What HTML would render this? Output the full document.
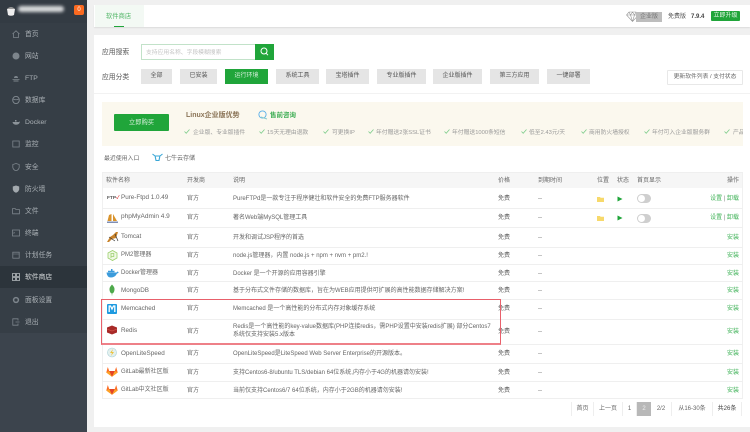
<!DOCTYPE html>
<html lang="zh"><head><meta charset="utf-8"><title>软件商店</title>
<style>
html,body{margin:0;padding:0;width:750px;height:432px;overflow:hidden;background:#f0f0f0}
body{font-family:"Liberation Sans","Noto Sans CJK SC",sans-serif;font-size:6px;color:#666}
#w{position:absolute;left:0;top:0;width:750px;height:432px;overflow:hidden;filter:blur(.35px)}
div,svg{position:absolute}
.t{position:absolute;white-space:nowrap;line-height:10px;height:10px;margin-top:.6px}
.m{left:25px;color:#aab0b5;font-size:6.800px}
.mi{left:12px;width:8px;height:8px}
.b{top:69px;height:15px;line-height:15px;background:#e5e5e5;color:#555;text-align:center;font-size:6px}
.l{left:102px;width:641px;height:1px;background:#efefef}
.g{color:#666}
.ck{width:6px;height:5px}
.f{font-size:5.800px;color:#999}
.p{top:402px;height:14px;line-height:14px;text-align:center;border-right:1px solid #eee;box-sizing:border-box;font-size:6px;color:#666}
.a{right:11px;color:#3fb257;font-size:6px}
</style></head><body><div id="w">

<!-- sidebar -->
<div style="left:0;top:0;width:87px;height:432px;background:#3c444d"></div>
<div style="left:0;top:23px;width:87px;height:310px;background:#363e46"></div>
<div style="left:0;top:0;width:87px;height:23px;background:#333b43"></div>
<div style="left:0;top:266px;width:87px;height:22px;background:#2c343b"></div>
<svg style="left:5px;top:4px" width="12" height="13" viewBox="0 0 12 13"><path d="M2 5h8l-1 6q-3 1.500-6 0z" fill="#eee"/><path d="M2 5q4-4 8 0" fill="#999"/></svg>
<div style="left:18px;top:6px;width:46px;height:6px;background:#d8dadc;border-radius:3px;filter:blur(1.500px)"></div>
<div style="left:74px;top:5px;width:10px;height:10px;background:#fb6a20;border-radius:2px"></div>
<div class="t" style="left:74px;top:4.500px;width:10px;text-align:center;color:#fff;font-size:6px">0</div>

<svg class="mi" style="top:30px" viewBox="0 0 8 8"><path d="M.5 4L4 .8 7.500 4M1.500 3.500V7.500h5V3.500" fill="none" stroke="#7d858c" stroke-width=".8"/></svg>
<div class="t m" style="top:29px">首页</div>
<svg class="mi" style="top:52px" viewBox="0 0 8 8"><circle cx="4" cy="4" r="3.500" fill="#7d858c"/></svg>
<div class="t m" style="top:51px">网站</div>
<svg class="mi" style="top:74px" viewBox="0 0 8 8"><path d="M2 4a2 2 0 014 0zM.5 5h7v.8h-7zM1.500 6.500h5v1h-5z" fill="#7d858c"/></svg>
<div class="t m" style="top:73px">FTP</div>
<svg class="mi" style="top:96px" viewBox="0 0 8 8"><ellipse cx="4" cy="4" rx="3.300" ry="3.600" fill="none" stroke="#7d858c"/><path d="M1 3q3 1.500 6 0" fill="none" stroke="#7d858c" stroke-width=".7"/></svg>
<div class="t m" style="top:95px">数据库</div>
<svg class="mi" style="top:118px" viewBox="0 0 8 8"><path d="M.5 4h6.500l1-.8q-.5 3.500-4 3.500-3 0-3.500-2.700zM3 2h1.500v1.500H3z" fill="#8d949a"/></svg>
<div class="t m" style="top:117px">Docker</div>
<svg class="mi" style="top:140px" viewBox="0 0 8 8"><rect x=".8" y="1" width="6.400" height="6" fill="none" stroke="#7d858c" stroke-width=".8"/></svg>
<div class="t m" style="top:139px">监控</div>
<svg class="mi" style="top:163px" viewBox="0 0 8 8"><path d="M4 .5l3.200 1v3Q6.500 7 4 7.800 1.500 7 .8 4.500v-3z" fill="none" stroke="#7d858c" stroke-width=".8"/></svg>
<div class="t m" style="top:162px">安全</div>
<svg class="mi" style="top:185px" viewBox="0 0 8 8"><path d="M4 .5l3.200 1v3Q6.500 7 4 7.800 1.500 7 .8 4.500v-3z" fill="#a3a9ae"/></svg>
<div class="t m" style="top:184px">防火墙</div>
<svg class="mi" style="top:207px" viewBox="0 0 8 8"><path d="M.6 1.500h2.500l.8 1h3.500v4.300H.6z" fill="none" stroke="#7d858c" stroke-width=".8"/></svg>
<div class="t m" style="top:206px">文件</div>
<svg class="mi" style="top:229px" viewBox="0 0 8 8"><rect x=".5" y="1" width="7" height="6" fill="none" stroke="#7d858c" stroke-width=".8"/><path d="M1.500 3l1 .8-1 .8" fill="none" stroke="#7d858c" stroke-width=".6"/></svg>
<div class="t m" style="top:228px">终端</div>
<svg class="mi" style="top:251px" viewBox="0 0 8 8"><rect x=".8" y="1.200" width="6.400" height="6" fill="none" stroke="#7d858c" stroke-width=".8"/><path d="M.8 3h6.400" stroke="#7d858c" stroke-width=".6"/></svg>
<div class="t m" style="top:250px">计划任务</div>
<svg class="mi" style="top:273px" viewBox="0 0 8 8"><path d="M.5.500h3v3h-3zM4.500.500h3v3h-3zM.5 4.500h3v3h-3zM4.500 4.500h3v3h-3z" fill="none" stroke="#b8bdc1" stroke-width=".8"/></svg>
<div class="t m" style="top:272px;color:#d5d8da">软件商店</div>
<svg class="mi" style="top:296px" viewBox="0 0 8 8"><circle cx="4" cy="4" r="2.400" fill="none" stroke="#7d858c" stroke-width="1.500"/></svg>
<div class="t m" style="top:295px">面板设置</div>
<svg class="mi" style="top:318px" viewBox="0 0 8 8"><path d="M6 2.500V.8H.8v6.400H6V5.500M3.500 4h4" fill="none" stroke="#7d858c" stroke-width=".8"/></svg>
<div class="t m" style="top:317px">退出</div>

<!-- top bar -->
<div style="left:94px;top:5px;width:656px;height:22px;background:#fff;box-shadow:0 1px 1px #ddd"></div>
<div style="left:95px;top:5px;width:49px;height:22px;background:#f3f9f4"></div>
<div class="t" style="left:106px;top:11.500px;font-size:6.300px;color:#4fb565">软件商店</div>
<div style="left:114px;top:26px;width:10px;height:1px;background:#20a53a"></div>
<svg style="left:626px;top:11px" width="13" height="11" viewBox="0 0 13 11"><path d="M3 1h7l2.500 3L6.500 10.500.5 4zM.5 4h12M4.500 4l2 6.500 2-6.500M3 1l1.500 3L6.500 1l2 3L10 1" fill="none" stroke="#999" stroke-width=".6"/></svg>
<div style="left:636px;top:12px;width:26px;height:10px;background:#bdbdbd"></div>
<div class="t" style="left:636px;top:11.500px;width:26px;text-align:center;color:#777;font-size:6px">企业版</div>
<div class="t" style="left:668px;top:11.500px;font-size:6px;color:#555">免费版</div>
<div class="t" style="left:691px;top:11.500px;font-size:6px;color:#444;font-weight:bold">7.9.4</div>
<div style="left:711px;top:11px;width:29px;height:10px;background:#20a53a;border-radius:1px"></div>
<div class="t" style="left:711px;top:10.500px;width:29px;color:#e5f5e8;text-align:center;font-size:6px">立即升级</div>

<!-- main card -->
<div style="left:94px;top:35px;width:656px;height:392px;background:#fff"></div>
<div class="t" style="left:102px;top:47px;font-size:6.800px;color:#555">应用搜索</div>
<div style="left:141px;top:44px;width:114px;height:16px;box-sizing:border-box;border:1px solid #c2e2c9;border-right:0"></div>
<div class="t" style="left:146px;top:47px;font-size:5.800px;color:#c4c4c4">支持应用名称、字段模糊搜索</div>
<div style="left:255px;top:44px;width:19px;height:16px;background:#20a53a"></div>
<svg style="left:260px;top:47px" width="9" height="10" viewBox="0 0 9 10"><circle cx="4" cy="4" r="3" fill="none" stroke="#fff"/><path d="M6 6.200l2 2" stroke="#fff"/></svg>
<div class="t" style="left:102px;top:72px;font-size:6.800px;color:#555">应用分类</div>
<div class="b" style="left:141px;width:31px">全部</div>
<div class="b" style="left:180px;width:37px">已安装</div>
<div class="b" style="left:225px;width:43px;background:#20a53a;color:#d8f0dd">运行环境</div>
<div class="b" style="left:276px;width:43px">系统工具</div>
<div class="b" style="left:326px;width:43px">宝塔插件</div>
<div class="b" style="left:377px;width:49px">专业版插件</div>
<div class="b" style="left:433px;width:49px">企业版插件</div>
<div class="b" style="left:490px;width:49px">第三方应用</div>
<div class="b" style="left:547px;width:43px">一键部署</div>
<div style="left:667px;top:70px;width:76px;height:15px;box-sizing:border-box;border:1px solid #e8e8e8;border-radius:1px"></div>
<div class="t" style="left:667px;top:71.500px;width:76px;text-align:center;font-size:5.800px;color:#666">更新软件列表 / 支付状态</div>
<div style="left:94px;top:93px;width:656px;height:1px;background:#f2f2f2"></div>

<!-- banner -->
<div style="left:102px;top:102px;width:641px;height:44px;background:#fbf8ee;overflow:hidden">
<div style="left:12px;top:12px;width:55px;height:17px;background:#20a53a;border-radius:1px"></div>
<div class="t" style="left:12px;top:15.500px;width:55px;text-align:center;color:#d8f0dd;font-size:6.300px">立即购买</div>
<div class="t" style="left:84px;top:8px;font-size:7px;font-weight:bold;color:#8a7356">Linux企业版优势</div>
<svg style="left:156px;top:8px" width="10" height="10" viewBox="0 0 10 10"><circle cx="4.500" cy="4.500" r="3.600" fill="none" stroke="#58aee8" stroke-width=".9"/><path d="M3 7l6 2" stroke="#8cc" stroke-width="1"/></svg>
<div class="t" style="left:168px;top:8px;font-size:6.500px;font-weight:bold;color:#3fae55">售前咨询</div>
<svg class="ck" style="left:82px;top:27px" viewBox="0 0 6 5"><path d="M.5 2.500L2.200 4.300 5.500.5" fill="none" stroke="#7ccc8a" stroke-width=".8"/></svg><div class="t f" style="left:91px;top:25px">企业版、专业版插件</div>
<svg class="ck" style="left:157px;top:27px" viewBox="0 0 6 5"><path d="M.5 2.500L2.200 4.300 5.500.5" fill="none" stroke="#7ccc8a" stroke-width=".8"/></svg><div class="t f" style="left:165px;top:25px">15天无理由退款</div>
<svg class="ck" style="left:221px;top:27px" viewBox="0 0 6 5"><path d="M.5 2.500L2.200 4.300 5.500.5" fill="none" stroke="#7ccc8a" stroke-width=".8"/></svg><div class="t f" style="left:230px;top:25px">可更换IP</div>
<svg class="ck" style="left:266px;top:27px" viewBox="0 0 6 5"><path d="M.5 2.500L2.200 4.300 5.500.5" fill="none" stroke="#7ccc8a" stroke-width=".8"/></svg><div class="t f" style="left:274px;top:25px">年付赠送2张SSL证书</div>
<svg class="ck" style="left:342px;top:27px" viewBox="0 0 6 5"><path d="M.5 2.500L2.200 4.300 5.500.5" fill="none" stroke="#7ccc8a" stroke-width=".8"/></svg><div class="t f" style="left:350px;top:25px">年付赠送1000条短信</div>
<svg class="ck" style="left:419px;top:27px" viewBox="0 0 6 5"><path d="M.5 2.500L2.200 4.300 5.500.5" fill="none" stroke="#7ccc8a" stroke-width=".8"/></svg><div class="t f" style="left:427px;top:25px">低至2.43元/天</div>
<svg class="ck" style="left:479px;top:27px" viewBox="0 0 6 5"><path d="M.5 2.500L2.200 4.300 5.500.5" fill="none" stroke="#7ccc8a" stroke-width=".8"/></svg><div class="t f" style="left:487px;top:25px">商用防火墙授权</div>
<svg class="ck" style="left:542px;top:27px" viewBox="0 0 6 5"><path d="M.5 2.500L2.200 4.300 5.500.5" fill="none" stroke="#7ccc8a" stroke-width=".8"/></svg><div class="t f" style="left:550px;top:25px">年付可入企业版服务群</div>
<svg class="ck" style="left:622px;top:27px" viewBox="0 0 6 5"><path d="M.5 2.500L2.200 4.300 5.500.5" fill="none" stroke="#7ccc8a" stroke-width=".8"/></svg><div class="t f" style="left:631px;top:25px">产品</div>
</div>

<div class="t g" style="left:104px;top:153px;font-size:5.900px">最近使用入口</div>
<svg style="left:152px;top:153px" width="11" height="10" viewBox="0 0 11 10"><path d="M.5 1l2.500 2h5l2.500-2M3.200 3.500L4 7.500h3l.8-4" fill="none" stroke="#3aa7d6" stroke-width="1.100"/></svg>
<div class="t g" style="left:165px;top:153px;font-size:6px">七牛云存储</div>

<!-- table -->
<div style="left:102px;top:172px;width:641px;height:16px;background:#f6f6f6"></div>
<div style="left:102px;top:172px;width:1px;height:226px;background:#f0f0f0"></div>
<div style="left:742px;top:172px;width:1px;height:226px;background:#f0f0f0"></div>
<div class="l" style="top:172px"></div><div class="l" style="top:208px"></div><div class="l" style="top:227px"></div><div class="l" style="top:247px"></div><div class="l" style="top:264px"></div><div class="l" style="top:281px"></div><div class="l" style="top:299px"></div><div class="l" style="top:319px"></div><div class="l" style="top:344px"></div><div class="l" style="top:363px"></div><div class="l" style="top:381px"></div><div class="l" style="top:398px"></div>

<div class="t g" style="left:106px;top:175px">软件名称</div>
<div class="t g" style="left:187px;top:175px">开发商</div>
<div class="t g" style="left:233px;top:175px">说明</div>
<div class="t g" style="left:498px;top:175px">价格</div>
<div class="t g" style="left:538px;top:175px">到期时间</div>
<div class="t g" style="left:597px;top:175px">位置</div>
<div class="t g" style="left:617px;top:175px">状态</div>
<div class="t g" style="left:637px;top:175px">首页显示</div>
<div class="t g" style="right:11px;top:175px">操作</div>

<!-- icons -->
<div class="t" style="left:107px;top:193px;font-size:4.800px;font-weight:bold;color:#555">FTP<span style="color:#d33">✓</span></div>
<svg style="left:107px;top:211px" width="11" height="13" viewBox="0 0 11 13"><path d="M5 1v10M2 4L.5 10h4V3zM6 3l4 7H6z" fill="#d9932c"/><path d="M0 10.500h11v1.500H0z" fill="#7f8fb5"/></svg>
<svg style="left:106px;top:231px" width="14" height="12" viewBox="0 0 14 12"><path d="M1 11L4 6l3-2 3-3 2 0-1 3-1 3-4 1-3 3z" fill="#c9832a"/><path d="M3 6l6 4M9 3l3 7" stroke="#333" stroke-width=".7"/></svg>
<svg style="left:107px;top:250px" width="11" height="11" viewBox="0 0 11 11"><path d="M5.500.500l4.500 2.500v5l-4.500 2.500L1 8V3z" fill="#eff8e4" stroke="#9ccf6d" stroke-width=".8"/><path d="M4 3.500h2.800v3H4zM4 3.500v4.500" fill="none" stroke="#9ccf6d" stroke-width=".8"/></svg>
<svg style="left:106px;top:268px" width="13" height="10" viewBox="0 0 13 10"><path d="M.5 4.500h10l1-1 1.200.8q-.5 1.200-1.700 1.200Q9 9.500 5 9.500q-4 0-4.500-5z" fill="#3b9bdb"/><path d="M2 2.800h6.500v1.500H2zM5 1h1.500v2H5z" fill="#3b9bdb"/></svg>
<svg style="left:109px;top:284px" width="6" height="12" viewBox="0 0 6 12"><path d="M3 .5Q6 3.500 5.500 6 5 9 3.200 9.500v2h-.4v-2Q1 9 .5 6 0 3.500 3 .5z" fill="#4ea94b"/></svg>
<svg style="left:107px;top:304px" width="10" height="10" viewBox="0 0 10 10"><rect width="10" height="10" rx="1" fill="#1e9ae0"/><path d="M2.200 8V2h1.300L5 5l1.500-3h1.300v6" fill="none" stroke="#fff" stroke-width="1.300"/></svg>
<svg style="left:106px;top:325px" width="12" height="10" viewBox="0 0 12 10"><path d="M1 2.500L6 .5l5 2v5L6 9.500l-5-2z" fill="#a82a28"/><path d="M1 4l5 2 5-2" fill="none" stroke="#d85a50" stroke-width=".6"/></svg>
<svg style="left:107px;top:347px" width="10" height="11" viewBox="0 0 10 11"><circle cx="5" cy="5.500" r="4.500" fill="#e3f0ee" stroke="#a9cfd6" stroke-width=".6"/><path d="M6 2L3 6h2l-1 3 3-4H5z" fill="#edc23c"/></svg>
<svg style="left:106px;top:366px" width="12" height="11" viewBox="0 0 12 11"><path d="M6 10.800L.3 6.500 1.800 1l1.400 4h5.600L10.200 1l1.500 5.500z" fill="#fc6d26"/><path d="M6 10.800L3.200 5h5.600z" fill="#e24329"/><path d="M.3 6.500L3.200 5 6 10.800zM11.700 6.500L8.800 5 6 10.800z" fill="#fca326"/></svg>
<svg style="left:106px;top:384px" width="12" height="11" viewBox="0 0 12 11"><path d="M6 10.800L.3 6.500 1.800 1l1.400 4h5.600L10.200 1l1.500 5.500z" fill="#fc6d26"/><path d="M6 10.800L3.200 5h5.600z" fill="#e24329"/><path d="M.3 6.500L3.200 5 6 10.800zM11.700 6.500L8.800 5 6 10.800z" fill="#fca326"/></svg>

<!-- names -->
<div class="t g" style="left:121px;top:192px;font-size:6.300px">Pure-Ftpd 1.0.49</div>
<div class="t g" style="left:121px;top:211px;font-size:6.500px">phpMyAdmin 4.9</div>
<div class="t g" style="left:121px;top:231px;font-size:6.300px">Tomcat</div>
<div class="t g" style="left:121px;top:249px;font-size:6px">PM2管理器</div>
<div class="t g" style="left:121px;top:267px;font-size:6px">Docker管理器</div>
<div class="t g" style="left:121px;top:285px;font-size:6.300px">MongoDB</div>
<div class="t g" style="left:121px;top:303px;font-size:6.300px">Memcached</div>
<div class="t g" style="left:121px;top:325px;font-size:6.300px">Redis</div>
<div class="t g" style="left:121px;top:348px;font-size:6.300px">OpenLiteSpeed</div>
<div class="t g" style="left:121px;top:366px;font-size:6px">GitLab最新社区版</div>
<div class="t g" style="left:121px;top:384px;font-size:6px">GitLab中文社区版</div>

<!-- dev -->
<div class="t g" style="left:187px;top:193px">官方</div><div class="t g" style="left:187px;top:212px">官方</div><div class="t g" style="left:187px;top:232px">官方</div><div class="t g" style="left:187px;top:250px">官方</div><div class="t g" style="left:187px;top:268px">官方</div><div class="t g" style="left:187px;top:285px">官方</div><div class="t g" style="left:187px;top:303px">官方</div><div class="t g" style="left:187px;top:326px">官方</div><div class="t g" style="left:187px;top:348px">官方</div><div class="t g" style="left:187px;top:367px">官方</div><div class="t g" style="left:187px;top:385px">官方</div>

<!-- desc -->
<div class="t g" style="left:233px;top:193px">PureFTPd是一款专注于程序健壮和软件安全的免费FTP服务器软件</div>
<div class="t g" style="left:233px;top:212px">著名Web端MySQL管理工具</div>
<div class="t g" style="left:233px;top:232px">开发和调试JSP程序的首选</div>
<div class="t g" style="left:233px;top:250px">node.js管理器，内置 node.js + npm + nvm + pm2.!</div>
<div class="t g" style="left:233px;top:268px">Docker 是一个开源的应用容器引擎</div>
<div class="t g" style="left:233px;top:285px">基于分布式文件存储的数据库，旨在为WEB应用提供可扩展的高性能数据存储解决方案!</div>
<div class="t g" style="left:233px;top:303px">Memcached 是一个高性能的分布式内存对象缓存系统</div>
<div class="t g" style="left:233px;top:321px">Redis是一个高性能的key-value数据库(PHP连接redis，需PHP设置中安装redis扩展) 部分Centos7</div>
<div class="t g" style="left:233px;top:329.500px">系统仅支持安装5.x版本</div>
<div class="t g" style="left:233px;top:348px">OpenLiteSpeed是LiteSpeed Web Server Enterprise的开源版本。</div>
<div class="t g" style="left:233px;top:367px">支持Centos6-8/ubuntu TLS/debian 64位系统,内存小于4G的机器请勿安装!</div>
<div class="t g" style="left:233px;top:385px">当前仅支持Centos6/7 64位系统，内存小于2GB的机器请勿安装!</div>

<!-- price / expire -->
<div class="t g" style="left:498px;top:193px">免费</div><div class="t g" style="left:498px;top:212px">免费</div><div class="t g" style="left:498px;top:232px">免费</div><div class="t g" style="left:498px;top:250px">免费</div><div class="t g" style="left:498px;top:268px">免费</div><div class="t g" style="left:498px;top:285px">免费</div><div class="t g" style="left:498px;top:303px">免费</div><div class="t g" style="left:498px;top:326px">免费</div><div class="t g" style="left:498px;top:348px">免费</div><div class="t g" style="left:498px;top:367px">免费</div><div class="t g" style="left:498px;top:385px">免费</div>
<div class="t g" style="left:538px;top:193px">--</div><div class="t g" style="left:538px;top:212px">--</div><div class="t g" style="left:538px;top:232px">--</div><div class="t g" style="left:538px;top:250px">--</div><div class="t g" style="left:538px;top:268px">--</div><div class="t g" style="left:538px;top:285px">--</div><div class="t g" style="left:538px;top:303px">--</div><div class="t g" style="left:538px;top:326px">--</div><div class="t g" style="left:538px;top:348px">--</div><div class="t g" style="left:538px;top:367px">--</div><div class="t g" style="left:538px;top:385px">--</div>

<!-- state -->
<svg style="left:597px;top:196px" width="8" height="6" viewBox="0 0 8 6"><path d="M0 1h3l.6.7H7V6H0z" fill="#f7d96b"/></svg>
<svg style="left:597px;top:215px" width="8" height="6" viewBox="0 0 8 6"><path d="M0 1h3l.6.7H7V6H0z" fill="#f7d96b"/></svg>
<svg style="left:617px;top:196px" width="6" height="6" viewBox="0 0 6 6"><path d="M.5.500L5.500 3 .5 5.500z" fill="#20a53a"/></svg>
<svg style="left:617px;top:215px" width="6" height="6" viewBox="0 0 6 6"><path d="M.5.500L5.500 3 .5 5.500z" fill="#20a53a"/></svg>
<div style="left:637px;top:194px;width:14px;height:9px;border-radius:4.500px;background:#cfcfcf"></div><div style="left:638px;top:195px;width:7px;height:7px;border-radius:3.500px;background:#fff"></div>
<div style="left:637px;top:214px;width:14px;height:9px;border-radius:4.500px;background:#cfcfcf"></div><div style="left:638px;top:215px;width:7px;height:7px;border-radius:3.500px;background:#fff"></div>

<div class="t a" style="top:193px">设置 <span style="color:#888">|</span> 卸载</div>
<div class="t a" style="top:212px">设置 <span style="color:#888">|</span> 卸载</div>
<div class="t a" style="top:232px">安装</div><div class="t a" style="top:250px">安装</div><div class="t a" style="top:268px">安装</div><div class="t a" style="top:285px">安装</div><div class="t a" style="top:303px">安装</div><div class="t a" style="top:326px">安装</div><div class="t a" style="top:348px">安装</div><div class="t a" style="top:367px">安装</div><div class="t a" style="top:385px">安装</div>

<!-- pagination -->
<div class="p" style="left:571px;width:23px;border-left:1px solid #eee">首页</div>
<div class="p" style="left:594px;width:29px">上一页</div>
<div class="p" style="left:623px;width:14px">1</div>
<div class="p" style="left:637px;width:14px;background:#b8b8b8;color:#eee;border:0">2</div>
<div class="p" style="left:651px;width:21px">2/2</div>
<div class="p" style="left:672px;width:41px">从16-30条</div>
<div class="p" style="left:713px;width:29px;color:#444">共26条</div>

<!-- red annotation -->
<div style="left:101px;top:299px;width:400px;height:46px;box-sizing:border-box;border:1px solid #e8606b;border-bottom:2px solid #ee8088;border-right:1.500px solid #e8606b"></div>
</div></body></html>
